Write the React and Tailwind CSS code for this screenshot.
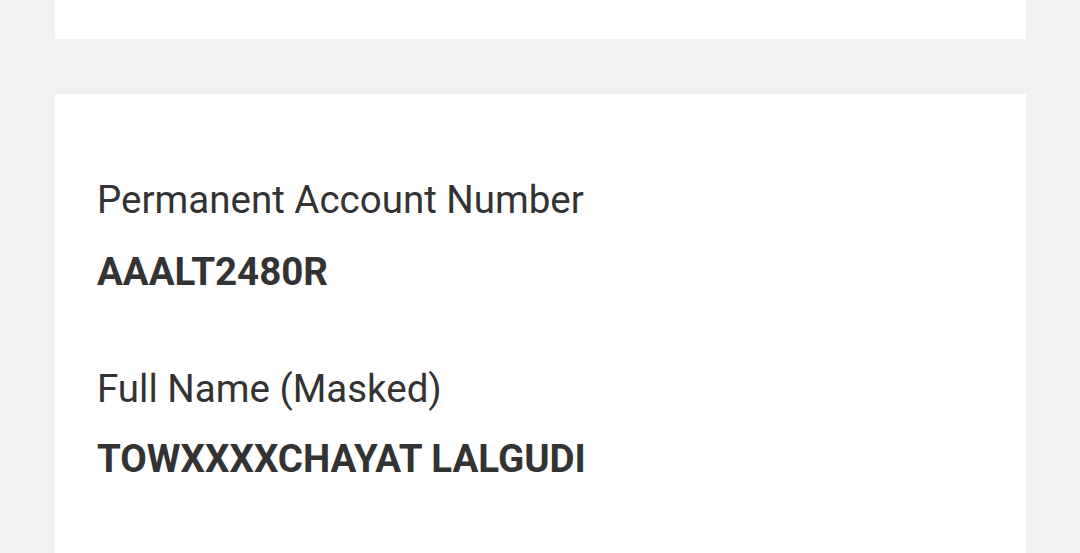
export default function App() {
  return (
    <div className="h-[553px] overflow-hidden bg-[#f1f1f1] font-['Roboto',sans-serif] text-[#333333]">
      <div className="ml-[55px] mr-[54px] flex flex-col">
        <div className="h-[39px] bg-white" />
        <section className="mt-[55px] h-[600px] bg-white px-[42px] pt-[84px]">
          <p className="text-[38.5px] leading-[44px]">Permanent Account Number</p>
          <p className="mt-[28px] text-[38.5px] font-bold leading-[44px]">AAALT2480R</p>
          <p className="mt-[73px] text-[38.5px] leading-[44px]">Full Name (Masked)</p>
          <p className="mt-[26px] text-[38.5px] font-bold leading-[44px]">TOWXXXXCHAYAT LALGUDI</p>
        </section>
      </div>
    </div>
  );
}
